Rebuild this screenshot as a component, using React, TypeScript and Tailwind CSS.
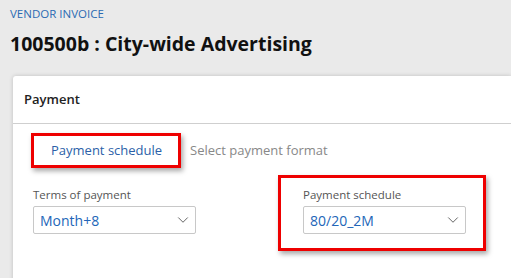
import { ChevronDown } from 'lucide-react';

const font = { fontFamily: '"Open Sans", "Noto Sans", sans-serif' };

function Dropdown({ value }: { value: string }) {
  return (
    <div className="flex items-center justify-between w-[163px] h-[28px] border border-[#c8c8c8] rounded-[2px] bg-white pl-[6px] pr-[3px]">
      <span className="text-[14px] text-[#2266b8]">{value}</span>
      <ChevronDown className="w-[18px] h-[18px] text-[#555]" strokeWidth={1.2} />
    </div>
  );
}

export default function App() {
  return (
    <div className="w-[511px] h-[278px] overflow-hidden bg-[#eaeaea]" style={font}>
      {/* Page header */}
      <div className="px-[10px] pt-[6px]">
        <div className="text-[11.5px] leading-[16px] text-[#2a6ab3]">VENDOR INVOICE</div>
        <h1 className="mt-[10px] text-[19.5px] leading-[24px] font-bold text-[#111]">
          100500b : City-wide Advertising
        </h1>
      </div>

      {/* Card */}
      <div className="ml-[13px] mt-[20px] h-[300px] bg-white rounded-tl-[3px] shadow-[0_0_4px_rgba(0,0,0,0.18)]">
        <div className="h-[48px] flex items-center pl-[11px] border-b border-[#cfcfcf]">
          <span className="text-[13px] font-semibold text-[#222]">Payment</span>
        </div>

        {/* Tabs */}
        <div className="flex items-center pl-[18px] pt-[9px]">
          <div className="w-[150px] h-[35px] flex items-center pl-[17px] border-[3px] border-[#ee0000] shadow-[2px_3px_5px_rgba(0,0,0,0.35)]">
            <span className="text-[13px] text-[#2b5fa8]">Payment schedule</span>
          </div>
          <span className="ml-[9px] text-[13px] text-[#888]">Select payment format</span>
        </div>

        {/* Fields */}
        <div className="flex items-start pl-[20px] mt-[7px]">
          <div className="pt-[12px]">
            <div className="text-[11.5px] leading-[16px] text-[#555]">Terms of payment</div>
            <div className="mt-[3px]">
              <Dropdown value="Month+8" />
            </div>
          </div>
          <div className="ml-[82px] w-[208px] border-[3px] border-[#ee0000] pt-[9px] pb-[14px] pl-[22px] shadow-[2px_3px_5px_rgba(0,0,0,0.35)]">
            <div className="text-[11.5px] leading-[16px] text-[#555]">Payment schedule</div>
            <div className="mt-[3px]">
              <Dropdown value="80/20_2M" />
            </div>
          </div>
        </div>
      </div>
    </div>
  );
}
